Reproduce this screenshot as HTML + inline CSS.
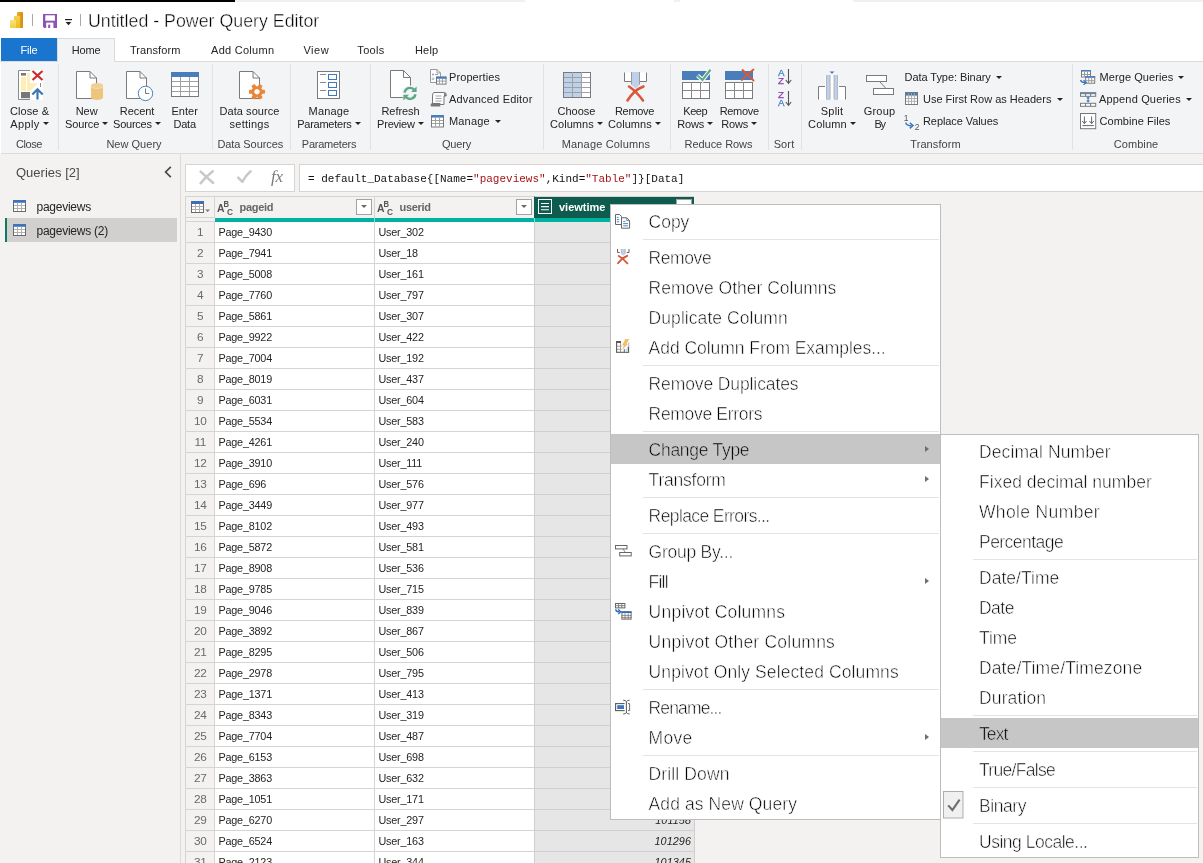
<!DOCTYPE html>
<html lang="en"><head><meta charset="utf-8"><title>Untitled - Power Query Editor</title>
<style>
*{box-sizing:border-box;margin:0;padding:0}
html,body{width:1203px;height:863px;overflow:hidden;background:#fff}
body{position:relative;will-change:transform;font-family:"Liberation Sans",sans-serif;font-size:11px;color:#252423}
i,b{font-style:normal;font-weight:normal;display:block}
svg{position:absolute;overflow:visible}
.strip{position:absolute;top:0;height:2px}
#titlebar{position:absolute;left:0;top:2px;width:1203px;height:36px;background:#fff}
.tsep{position:absolute;top:12px;width:1px;height:12px;background:#a6a6a6}
#title{position:absolute;left:88px;top:7px;height:24px;line-height:24px;font-size:17.8px;color:#000;white-space:nowrap;-webkit-text-stroke:.4px #fff}
#tabs{position:absolute;left:0;top:38px;width:1203px;height:24px;background:#fff;border-bottom:1px solid #dadbdc}
.tab{position:absolute;top:0;height:23px;line-height:24.4px;text-align:center;font-size:11px;color:#252423;white-space:nowrap}
.tab.file{background:#1a75cf;color:#fff}
.tab.home{background:#f3f4f6;height:24px;border:1px solid #dadbdc;border-bottom:none;line-height:22.4px}
#ribbon{position:absolute;left:1px;top:62px;width:1202px;height:92px;background:#f3f4f6;border-bottom:1px solid #dadbdc}
#ribbon>*{position:absolute}
.gsep{top:2px;width:1px;height:86px;background:#e1e2e4;margin-left:-1px}
.big{top:0;width:80px;height:70px;text-align:center;white-space:nowrap}
.big span{position:absolute;left:0;width:80px;height:13px;line-height:13px;font-size:11px}
.big .l1{top:42.5px}
.big .l2{top:55.5px}
.dd{display:inline-block;width:0;height:0;border:3.1px solid transparent;border-top:3.4px solid #252423;border-bottom:none;margin-left:3.2px;vertical-align:2.2px}
.glabel{top:75px;width:120px;height:14px;line-height:14px;text-align:center;font-size:11px;color:#444;white-space:nowrap}
.small{width:10px;height:18px;white-space:nowrap}
.small span{position:absolute;top:1px;height:14px;line-height:14px;font-size:11px}
#qpane{position:absolute;left:0;top:154px;width:180px;height:709px;background:#f3f2f1}
#vsplit{position:absolute;left:180px;top:154px;width:1px;height:709px;background:#dddbd9}
#mainbg{position:absolute;left:181px;top:154px;width:1022px;height:709px;background:#f3f2f1}
#cornerb{position:absolute;left:0;top:21px;width:30px;height:5px;background:#f3f2f1;border:1px solid #d6d4d2;border-right:none}
#qtitle{position:absolute;left:16px;top:9px;height:20px;line-height:20px;font-size:13px;color:#4a4a4a}
.qitem{position:absolute;left:5px;width:172px;height:23px}
.qitem.sel{background:#d2d0ce;height:24px}
.qitem span{position:absolute;left:31.5px;top:1px;height:23px;line-height:23px;font-size:12px;letter-spacing:-.25px;color:#252423;white-space:nowrap}
.qitem.sel span{top:2px}
.gbar{position:absolute;left:0;top:0;width:2px;height:24px;background:#0e7a64}
#fxctl{position:absolute;left:185px;top:164px;width:110px;height:28px;background:#fff;border:1px solid #d6d4d2}
#fxbox{position:absolute;left:299px;top:164px;width:910px;height:28px;background:#fff;border:1px solid #d6d4d2}
#fxbox span{position:absolute;left:8px;top:6.5px;height:14px;line-height:14px;font-family:"Liberation Mono",monospace;font-size:11px;color:#111;white-space:pre}
#fxbox em{font-style:normal;color:#a31515}
#fx{position:absolute;left:85px;top:1px;height:22px;line-height:22px;font-family:"Liberation Serif",serif;font-style:italic;font-size:17px;color:#7a7a7a;letter-spacing:-.3px}
#grid{position:absolute;left:185px;top:196px;width:510px;height:667px;overflow:hidden}
.hdr{position:absolute;top:0;height:22px;background:#f3f2f1;border:1px solid #d6d4d2;border-right:none;border-bottom:none}
.hdr.corner{border-bottom:none}
.hdr.selh{background:#0e5b4f;border-color:#0e5b4f;border-top-color:#d6d4d2}
.hn{position:absolute;left:24.5px;top:0;height:20px;line-height:20px;font-size:11px;font-weight:bold;color:#666;white-space:nowrap;letter-spacing:-.3px}
.selh .hn{color:#fff;left:24px;letter-spacing:0}
.ddbtn{position:absolute;right:2px;top:2px;width:16px;height:16px;background:#fff;border:1px solid #a3a3a3}
.ddbtn:after{content:"";position:absolute;left:4px;top:5px;border:3px solid transparent;border-top:3.2px solid #6a6a6a;border-bottom:none}
#tealbar{position:absolute;left:30px;top:22px;width:481px;height:4px;background:#00b3a1}
.row{position:absolute;left:0;width:510px;height:21px;white-space:nowrap}
.row span{position:absolute;top:0;height:21px;line-height:21px;border-left:1px solid #d6d4d2;border-bottom:1px solid #d6d4d2;font-size:10.8px;letter-spacing:-.2px;color:#252423;background:#fff;overflow:hidden}
.row .rn{left:0;width:29px;text-align:center;color:#6a6a6a;background:#f3f2f1;font-size:11.8px;letter-spacing:-.3px;padding-left:.5px}
.row .c1{left:29px;width:160px;padding-left:3.5px}
.row .c2{left:189px;width:160px;padding-left:3.5px}
.row .c3{left:349px;width:161px;background:#e6e6e6;border-color:#cfcfcf;border-right:1px solid #cfcfcf;text-align:right;padding-right:3px;font-style:italic;letter-spacing:.08px}
.menu{position:absolute;background:#fff;border:1px solid #bdbdbd;padding:2px 0 0 0}
.mi{position:relative;height:30px}
.mi span{position:absolute;top:0;height:30px;line-height:30px;font-size:17.5px;color:#000;white-space:nowrap;-webkit-text-stroke:.55px #fff}
.mi.hl:before{content:"";position:absolute;left:0;right:0;top:-.7px;height:29.3px;background:#c6c6c6}
.mi.hl span{-webkit-text-stroke-color:#c6c6c6}
.msep{position:relative;height:6px}
.msep i{position:absolute;top:2px;right:1px;height:1px;background:#e3e3e3}
.sub{position:absolute;right:11px;top:10.5px;width:0;height:0;border:3.5px solid transparent;border-left:4.5px solid #6e6e6e;border-right:none}

.small .dd{margin-left:5.2px}

#tealbar i{position:absolute;top:0;width:1px;height:4px;background:#8fd9cf}

.qitem.sel svg{top:6px !important}

</style></head>
<body>
<div class="strip" style="left:0;width:235px;background:#000"></div><div class="strip" style="left:235px;width:290px;background:#f0f0f0"></div><div class="strip" style="left:674px;width:6px;background:#f0f0f0"></div><div class="strip" style="left:853px;width:350px;background:#f0f0f0"></div>
<div id="titlebar"><svg style="left:10px;top:10px" width="13" height="16" viewBox="0 0 13 16" ><defs><linearGradient id="g1" x1="0" y1="0" x2="1" y2="0"><stop offset="0" stop-color="#e8b21e"/><stop offset="1" stop-color="#d48c12"/></linearGradient><linearGradient id="g2" x1="0" y1="0" x2="0" y2="1"><stop offset="0" stop-color="#f6d04a"/><stop offset="1" stop-color="#efb920"/></linearGradient><linearGradient id="g3" x1="0" y1="0" x2="0" y2="1"><stop offset="0" stop-color="#f9e37a"/><stop offset="1" stop-color="#f3cf45"/></linearGradient></defs><rect x="7" y="0" width="6" height="16" rx=".8" fill="url(#g1)"/><rect x="4" y="4" width="6" height="12" rx=".8" fill="url(#g2)"/><rect x="0" y="8" width="6" height="8" rx=".8" fill="url(#g3)"/></svg><i class="tsep" style="left:32px"></i><svg style="left:43px;top:12px" width="14" height="14" viewBox="0 0 14 14" ><path d="M0 0H14V14H1.2L0 12.8Z" fill="#8d52b3"/><rect x="2.3" y="1.3" width="9.6" height="5.4" fill="#fff"/><rect x="3.2" y="8.6" width="7.2" height="5.4" fill="#fff"/><rect x="5.2" y="10.6" width="2" height="3.4" fill="#8d52b3"/></svg><svg style="left:65px;top:17px" width="7" height="7" viewBox="0 0 7 7" ><rect x="0" y="0" width="7" height="1.2" fill="#222"/><path d="M.6 3H6.4L3.5 6.2Z" fill="#222"/></svg><i class="tsep" style="left:80px"></i><span id="title">Untitled - Power Query Editor</span></div>
<div id="tabs"><div class="tab file" style="left:1px;width:56px;letter-spacing:-0.159px">File</div><div class="tab home" style="left:57px;width:58px;letter-spacing:-0.161px">Home</div><div class="tab" style="left:115.19999999999999px;width:80px;letter-spacing:0.087px">Transform</div><div class="tab" style="left:202.7px;width:80px;letter-spacing:0.265px">Add Column</div><div class="tab" style="left:276.3px;width:80px;letter-spacing:0.486px">View</div><div class="tab" style="left:331px;width:80px;letter-spacing:0.323px">Tools</div><div class="tab" style="left:386.7px;width:80px;letter-spacing:0.194px">Help</div></div>
<div id="ribbon">
<i class="gsep" style="left:58px"></i><i class="gsep" style="left:212px"></i><i class="gsep" style="left:290px"></i><i class="gsep" style="left:370px"></i><i class="gsep" style="left:543px"></i><i class="gsep" style="left:670px"></i><i class="gsep" style="left:768px"></i><i class="gsep" style="left:801px"></i><i class="gsep" style="left:1072px"></i>
<svg style="left:17px;top:8px" width="26" height="30" viewBox="0 0 26 30" ><path d="M13 .5H.5V29.5H13" fill="#fff" stroke="#8a8a8a"/><rect x="1" y="1" width="24" height="28" fill="#fff" opacity="0"/><rect x="12" y="0" width="13" height="30" fill="#fff"/><rect x="3" y="3" width="5" height="2.6" fill="#777"/><rect x="3" y="7" width="5" height="14" fill="#fdeeb5"/><path d="M9 3H12V13Q14 13.5 20 13.5L12 21H9Z" fill="#fdeeb5"/><rect x="3" y="22" width="9" height="6.2" fill="#777"/><path d="M22.5 13V17" stroke="#8a8a8a"/><path d="M14.5 1L24.5 10M24.5 1L14.5 10" stroke="#cc2b2b" stroke-width="2.2" fill="none"/><path d="M19.5 29.5V19.5M14.3 24.5L19.5 19.2L24.7 24.5" stroke="#3b78b5" stroke-width="2.2" fill="none"/></svg><div class="big" style="left:-11.5px"><span class="l1" style="letter-spacing:0.096px">Close &amp;</span><span class="l2" style="letter-spacing:0.374px">Apply<b class="dd"></b></span></div>
<div class="glabel" style="left:-32px;letter-spacing:-0.385px">Close</div><svg style="left:75px;top:9px" width="28" height="30" viewBox="0 0 28 30" ><path d="M.5 .5H14L20.5 7V27.5H.5Z" fill="#fff" stroke="#7a7a7a"/><path d="M14 .5V7H20.5" fill="none" stroke="#7a7a7a"/><path d="M15 14.5V26.5A6 2.6 0 0 0 27 26.5V14.5Z" fill="#eec67b"/><ellipse cx="21" cy="14.5" rx="6" ry="2.4" fill="#f1cf8f"/><path d="M15 15A6 2.4 0 0 0 27 15" fill="none" stroke="#f7e3bb" stroke-width=".9"/></svg><div class="big" style="left:45.7px"><span class="l1" style="letter-spacing:0.028px">New</span><span class="l2" style="letter-spacing:-0.127px">Source<b class="dd"></b></span></div>
<svg style="left:125px;top:9px" width="28" height="31" viewBox="0 0 28 31" ><path d="M.5 .5H14L20.5 7V27.5H.5Z" fill="#fff" stroke="#7a7a7a"/><path d="M14 .5V7H20.5" fill="none" stroke="#7a7a7a"/><circle cx="19.5" cy="22.4" r="7.2" fill="#fff" stroke="#4b82bd" stroke-width="1"/><path d="M19.5 17.5V22.5H23.2" fill="none" stroke="#777" stroke-width="1"/></svg><div class="big" style="left:96px"><span class="l1" style="letter-spacing:-0.077px">Recent</span><span class="l2" style="letter-spacing:-0.251px">Sources<b class="dd"></b></span></div>
<svg style="left:170px;top:10px" width="28" height="25" viewBox="0 0 28 25" ><rect x=".5" y=".5" width="27" height="24" fill="#fff" stroke="#7a7a7a"/><rect x="0" y="0" width="28" height="5" fill="#4a7ebb"/><path d="M1 9.5H27" stroke="#a0a0a0"/><path d="M1 14.5H27" stroke="#a0a0a0"/><path d="M1 19.5H27" stroke="#a0a0a0"/><path d="M9.5 5V24" stroke="#a0a0a0"/><path d="M18.5 5V24" stroke="#a0a0a0"/></svg><div class="big" style="left:143.7px"><span class="l1" style="letter-spacing:0.061px">Enter</span><span class="l2" style="letter-spacing:-0.213px">Data</span></div>
<div class="glabel" style="left:73px;letter-spacing:0.019px">New Query</div><svg style="left:238px;top:9px" width="27" height="30" viewBox="0 0 27 30" ><path d="M.5 .5H14L20.5 7V27.5H.5Z" fill="#fff" stroke="#7a7a7a"/><path d="M14 .5V7H20.5" fill="none" stroke="#7a7a7a"/><g transform="translate(18 20.8) rotate(30)" fill="#e8873a"><rect x="-2" y="-8" width="4" height="5" rx=".8" transform="rotate(0)"/><rect x="-2" y="-8" width="4" height="5" rx=".8" transform="rotate(60)"/><rect x="-2" y="-8" width="4" height="5" rx=".8" transform="rotate(120)"/><rect x="-2" y="-8" width="4" height="5" rx=".8" transform="rotate(180)"/><rect x="-2" y="-8" width="4" height="5" rx=".8" transform="rotate(240)"/><rect x="-2" y="-8" width="4" height="5" rx=".8" transform="rotate(300)"/><circle r="5.6"/><circle r="2.6" fill="#fff"/></g></svg><div class="big" style="left:208.5px"><span class="l1" style="letter-spacing:0.053px">Data source</span><span class="l2" style="letter-spacing:0.247px">settings</span></div>
<div class="glabel" style="left:189.3px;letter-spacing:-0.08px">Data Sources</div><svg style="left:316px;top:9px" width="23" height="28" viewBox="0 0 23 28" ><rect x=".5" y=".5" width="22" height="27" fill="#fff" stroke="#7a7a7a"/><path d="M3 3.5H9M3 11.5H9M3 19.5H9" stroke="#8a8a8a"/><rect x="11.5" y="3.5" width="8" height="5" fill="#fff" stroke="#3b78c0"/><rect x="11.5" y="11.5" width="8" height="5" fill="#fff" stroke="#3b78c0"/><rect x="11.5" y="19.5" width="8" height="5" fill="#fff" stroke="#3b78c0"/></svg><div class="big" style="left:288px"><span class="l1" style="letter-spacing:0.172px">Manage</span><span class="l2" style="letter-spacing:-0.246px">Parameters<b class="dd"></b></span></div>
<div class="glabel" style="left:268px;letter-spacing:-0.246px">Parameters</div><svg style="left:389px;top:8px" width="28" height="31" viewBox="0 0 28 31" ><path d="M.5 .5H13.5L20.5 7.5V27.5H.5Z" fill="#fff" stroke="#7a7a7a"/><path d="M13.5 .5V7.5H20.5" fill="none" stroke="#7a7a7a"/><circle cx="20" cy="23.4" r="8" fill="#f3f4f6"/><g fill="none" stroke="#5ea88a" stroke-width="2.4"><path d="M14.6 22.6A5.5 5.5 0 0 1 24 19.6"/><path d="M25.4 24.2A5.5 5.5 0 0 1 16 27.2"/></g><path d="M26.6 16.4V22H21Z" fill="#5ea88a"/><path d="M13.4 30.4V24.8H19Z" fill="#5ea88a"/></svg><div class="big" style="left:359.5px"><span class="l1" style="letter-spacing:-0.062px">Refresh</span><span class="l2" style="letter-spacing:-0.204px">Preview<b class="dd"></b></span></div>
<div class="small" style="left:429px;top:7px"><svg style="left:0px;top:0px" width="17" height="16" viewBox="0 0 17 16" ><path d="M.5 .5H7L10.5 4V13.5H.5Z" fill="#fff" stroke="#9a9a9a"/><path d="M7 .5V4H10.5" fill="none" stroke="#9a9a9a"/><circle cx="3" cy="5.5" r="1" fill="#9a9a9a"/><path d="M5 5.5H8" stroke="#9a9a9a"/><circle cx="3" cy="9.8" r="1" fill="none" stroke="#9a9a9a" stroke-width=".7"/><g transform="translate(6 7.6)"><rect x=".5" y=".5" width="9.5" height="7" fill="#fff" stroke="#7a7a7a"/><rect x="0" y="0" width="10.5" height="2.2" fill="#4a7ebb"/><path d="M1 4.5H9.5" stroke="#a0a0a0"/><path d="M3.5 2.2V7" stroke="#a0a0a0"/><path d="M6.5 2.2V7" stroke="#a0a0a0"/></g></svg><span style="left:19px;letter-spacing:0.086px">Properties</span></div>
<div class="small" style="left:429px;top:29px"><svg style="left:0px;top:1px" width="17" height="15" viewBox="0 0 17 15" ><path d="M4 .5H14.5Q16.2 .5 16.2 3V4H14V12.5H2.5V4Q2.5 .5 4 .5Z" fill="#fff" stroke="#777"/><path d="M14 .8Q16 1 16.2 4H14Z" fill="#777"/><path d="M5.5 4H11.5M5.5 6.5H11.5M5.5 9H11.5" stroke="#8a8a8a" stroke-width=".8"/><path d="M.5 13.3Q.5 11 3 11H10.5Q9.5 13 10.5 14.5H2Q.5 14.5 .5 13.3Z" fill="#777"/></svg><span style="left:19px;letter-spacing:0.185px">Advanced Editor</span></div>
<div class="small" style="left:429px;top:51px"><svg style="left:1px;top:2px" width="13" height="12.5" viewBox="0 0 13 12.5" ><rect x=".5" y=".5" width="12" height="11.5" fill="#fff" stroke="#7a7a7a"/><rect x="0" y="0" width="13" height="2.6" fill="#4a7ebb"/><path d="M1 5.5H12" stroke="#a0a0a0"/><path d="M1 8.5H12" stroke="#a0a0a0"/><path d="M4.5 2.6V11.5" stroke="#a0a0a0"/><path d="M8.5 2.6V11.5" stroke="#a0a0a0"/></svg><span style="left:19px;letter-spacing:0.172px">Manage<b class="dd"></b></span></div>
<div class="glabel" style="left:395.5px;letter-spacing:-0.174px">Query</div><svg style="left:562px;top:10px" width="28" height="26" viewBox="0 0 28 26" ><rect x="0" y="0" width="28" height="26" fill="#fff"/><rect x="0" y="0" width="18.5" height="26" fill="#bdd2ea"/><rect x=".5" y=".5" width="27" height="25" fill="none" stroke="#7a7a7a"/><path d="M1 5.5H27" stroke="#a0a0a0"/><path d="M1 10.5H27" stroke="#a0a0a0"/><path d="M1 15.5H27" stroke="#a0a0a0"/><path d="M1 20.5H27" stroke="#a0a0a0"/><path d="M9.5 0V25" stroke="#a0a0a0"/><path d="M18.5 0V25" stroke="#a0a0a0"/></svg><div class="big" style="left:535.5px"><span class="l1" style="letter-spacing:-0.004px">Choose</span><span class="l2" style="letter-spacing:0.042px">Columns<b class="dd"></b></span></div>
<svg style="left:623px;top:9.5px" width="23" height="30" viewBox="0 0 23 30" ><path d="M.5 .5V9.5H7.5V.5M15.5 .5V9.5H22.5V.5" fill="#fff" stroke="#7a7a7a"/><path d="M7.5 0H15.5V13L11.5 16.5L7.5 13Z" fill="#bdd2ea"/><path d="M7.5 0V12.5M15.5 0V12.5" stroke="#9a9a9a"/><path d="M3.5 28.5Q10 18 19.5 14.5M5 14.5Q12 19 19 28.5" fill="none" stroke="#d9583a" stroke-width="2.6" stroke-linecap="round"/></svg><div class="big" style="left:593.5px"><span class="l1" style="letter-spacing:-0.311px">Remove</span><span class="l2" style="letter-spacing:0.042px">Columns<b class="dd"></b></span></div>
<div class="glabel" style="left:545px;letter-spacing:0.17px">Manage Columns</div><svg style="left:681px;top:7px" width="30" height="30" viewBox="0 0 30 30" ><rect x="0" y="2" width="28" height="9" fill="#4a7ebb"/><g transform="translate(0 13)"><rect x=".5" y=".5" width="27" height="16" fill="#fff" stroke="#7a7a7a"/><path d="M1 8.5H27" stroke="#8a8a8a"/><path d="M9.5 0V16" stroke="#8a8a8a"/><path d="M18.5 0V16" stroke="#8a8a8a"/></g><path d="M15.5 6.5L20.5 11L28.5 .8" fill="none" stroke="#fff" stroke-width="4.2"/><path d="M15.5 6.5L20.5 11L28.5 .8" fill="none" stroke="#5ea88a" stroke-width="2.2"/></svg><div class="big" style="left:654.2px"><span class="l1" style="letter-spacing:-0.476px">Keep</span><span class="l2" style="letter-spacing:-0.154px">Rows<b class="dd"></b></span></div>
<svg style="left:724px;top:7px" width="30" height="30" viewBox="0 0 30 30" ><rect x="0" y="2" width="28" height="9" fill="#4a7ebb"/><g transform="translate(0 13)"><rect x=".5" y=".5" width="27" height="16" fill="#fff" stroke="#7a7a7a"/><path d="M1 8.5H27" stroke="#8a8a8a"/><path d="M9.5 0V16" stroke="#8a8a8a"/><path d="M18.5 0V16" stroke="#8a8a8a"/></g><path d="M17.5 1L28.5 11.5M28.5 .5Q22 5 17 11" fill="none" stroke="#d9583a" stroke-width="1.9" stroke-linecap="round"/></svg><div class="big" style="left:698.2px"><span class="l1" style="letter-spacing:-0.311px">Remove</span><span class="l2" style="letter-spacing:-0.154px">Rows<b class="dd"></b></span></div>
<div class="glabel" style="left:657.5px;letter-spacing:-0.062px">Reduce Rows</div><svg style="left:776.5px;top:7px" width="15" height="16" viewBox="0 0 15 16" ><text x="0" y="7" font-family="Liberation Sans, sans-serif" font-size="9.8" stroke="#3e7bc4" stroke-width=".25" fill="#3e7bc4">A</text><text x="0" y="15" font-family="Liberation Sans, sans-serif" font-size="9.8" stroke="#8b3fb3" stroke-width=".25" fill="#8b3fb3">Z</text><path d="M10.5 0V14M7.8 11L10.5 14.3L13.2 11" fill="none" stroke="#555" stroke-width="1.1"/></svg><svg style="left:776.5px;top:29px" width="15" height="16" viewBox="0 0 15 16" ><text x="0" y="7" font-family="Liberation Sans, sans-serif" font-size="9.8" stroke="#8b3fb3" stroke-width=".25" fill="#8b3fb3">Z</text><text x="0" y="15" font-family="Liberation Sans, sans-serif" font-size="9.8" stroke="#3e7bc4" stroke-width=".25" fill="#3e7bc4">A</text><path d="M10.5 0V14M7.8 11L10.5 14.3L13.2 11" fill="none" stroke="#555" stroke-width="1.1"/></svg><div class="glabel" style="left:723px;letter-spacing:0.128px">Sort</div><svg style="left:817px;top:8.5px" width="28" height="29" viewBox="0 0 28 29" ><path d="M.5 28.5V15.5H7.5V28.5M20.5 28.5V15.5H27.5V28.5" fill="#fff" stroke="#7a7a7a"/><rect x="7" y="4" width="14" height="25" fill="#fff"/><rect x="8.5" y="4" width="3.6" height="25" fill="#bdd2ea"/><rect x="16" y="4" width="3.6" height="25" fill="#bdd2ea"/><path d="M8.5 4V28.5M12.1 4V28.5M16 4V28.5M19.6 4V28.5" stroke="#a8a8a8" stroke-width=".8"/><path d="M11.5 .6H16.5L14 2.8Z" fill="#3b78c0"/></svg><div class="big" style="left:791px"><span class="l1" style="letter-spacing:0.199px">Split</span><span class="l2" style="letter-spacing:0.116px">Column<b class="dd"></b></span></div>
<svg style="left:865px;top:13px" width="28" height="20" viewBox="0 0 28 20" ><rect x=".5" y=".5" width="20" height="6" fill="#fff" stroke="#7a7a7a"/><rect x="7.5" y="13.5" width="20" height="6" fill="#fff" stroke="#7a7a7a"/><path d="M13.5 6.5L20 13.5" stroke="#7a7a7a"/></svg><div class="big" style="left:838.5px"><span class="l1" style="letter-spacing:0.204px">Group</span><span class="l2" style="letter-spacing:-1.422px">By</span></div>
<div class="small" style="left:903px;top:7px"><span style="left:0.5px;letter-spacing:-0.055px">Data Type: Binary<b class="dd"></b></span></div>
<div class="small" style="left:903px;top:29px"><svg style="left:1px;top:1px" width="13" height="13" viewBox="0 0 13 13" ><rect x=".5" y=".5" width="12" height="12" fill="#fff" stroke="#777"/><rect x="1" y="1" width="11" height="2.6" fill="#3e7bc4"/><path d="M3.6 1V12M6.5 1V12M9.4 1V12M1 3.7H12M1 6.5H12M1 9.3H12" stroke="#a8a8a8" stroke-width=".9"/></svg><span style="left:19px;letter-spacing:0.001px">Use First Row as Headers<b class="dd"></b></span></div>
<div class="small" style="left:903px;top:51px"><svg style="left:0px;top:0px" width="17" height="17" viewBox="0 0 17 17" ><text x="-.3" y="7.6" font-family="Liberation Sans, sans-serif" font-size="8.5" fill="#555">1</text><text x="10.8" y="16.8" font-family="Liberation Sans, sans-serif" font-size="8.5" fill="#555">2</text><path d="M1.8 9.5Q2.2 13 7.5 12.6" fill="none" stroke="#3b78c0" stroke-width="1.5"/><path d="M5.8 9.8L9 12.6L5.8 15.4" fill="none" stroke="#3b78c0" stroke-width="1.5"/></svg><span style="left:19px;letter-spacing:-0.081px">Replace Values</span></div>
<div class="glabel" style="left:874.5px;letter-spacing:0.087px">Transform</div><div class="small" style="left:1079px;top:7px"><svg style="left:0px;top:1px" width="16" height="16" viewBox="0 0 16 16" ><g transform="translate(1 0)"><rect x=".5" y=".5" width="9" height="6.5" fill="#fff" stroke="#7a7a7a"/><rect x="0" y="0" width="10" height="1.6" fill="#4a7ebb"/><path d="M1 4.5H9" stroke="#9a9a9a"/><path d="M3.5 1.6V6.5" stroke="#9a9a9a"/><path d="M6.5 1.6V6.5" stroke="#9a9a9a"/></g><g transform="translate(5.2 6.2)"><rect x=".5" y=".5" width="9" height="6.5" fill="#fff" stroke="#7a7a7a"/><rect x="0" y="0" width="10" height="1.6" fill="#4a7ebb"/><path d="M1 4.5H9" stroke="#9a9a9a"/><path d="M3.5 1.6V6.5" stroke="#9a9a9a"/><path d="M6.5 1.6V6.5" stroke="#9a9a9a"/></g><path d="M.6 10Q1.2 12.6 5 12.4" fill="none" stroke="#3b78c0" stroke-width="1.4"/><path d="M3.6 10.2L6.2 12.4L3.6 14.8" fill="none" stroke="#3b78c0" stroke-width="1.4"/></svg><span style="left:19.5px;letter-spacing:0.08px">Merge Queries<b class="dd"></b></span></div>
<div class="small" style="left:1079px;top:29px"><svg style="left:0px;top:0px" width="17" height="17" viewBox="0 0 17 17" ><g transform="translate(0 1.2)"><rect x="0" y="0" width="16.2" height="1.6" fill="#3b78c0"/><rect x=".5" y="1.5" width="15.2" height="2.6" fill="#fff" stroke="#777"/><path d="M5.6 1.5V4M10.6 1.5V4" stroke="#777"/></g><g transform="translate(0 11.8)"><rect x=".5" y=".5" width="15.2" height="3" fill="#fff" stroke="#777"/><path d="M5.6 .5V3.5M10.6 .5V3.5" stroke="#777"/></g><path d="M6 6.4H10.2L8.1 8.2ZM6 9.4H10.2L8.1 11.4Z" fill="#3b78c0"/><path d="M8.1 5.5V11" stroke="#3b78c0" stroke-width="1"/></svg><span style="left:19px;letter-spacing:0.164px">Append Queries<b class="dd"></b></span></div>
<div class="small" style="left:1079px;top:51px"><svg style="left:0px;top:0px" width="17" height="17" viewBox="0 0 17 17" ><rect x=".5" y=".5" width="15.2" height="15.2" fill="#fff" stroke="#777"/><path d="M4.4 3.5V10.5M2.2 8L4.4 10.6L6.6 8M11.6 3.5V10.5M9.4 8L11.6 10.6L13.8 8" fill="none" stroke="#666" stroke-width="1"/><path d="M2.4 12.6H13.8" stroke="#666"/></svg><span style="left:19.5px;letter-spacing:0.045px">Combine Files</span></div>
<div class="glabel" style="left:1075px;letter-spacing:0.096px">Combine</div></div>
<div id="qpane"><div id="qtitle">Queries [2]</div><svg style="left:164px;top:11.5px" width="8" height="12" viewBox="0 0 8 12" ><path d="M6.8 .8L1.6 6L6.8 11.2" fill="none" stroke="#4a4a4a" stroke-width="1.7"/></svg><div class="qitem" style="top:41px"><svg style="left:8px;top:5px" width="13" height="12" viewBox="0 0 13 12" ><rect x=".5" y=".5" width="12" height="11" fill="#fff" stroke="#6a6a6a"/><rect x="0" y="0" width="13" height="2.8" fill="#3e73b9"/><path d="M1 5.5H12" stroke="#b0b0b0"/><path d="M1 8.5H12" stroke="#b0b0b0"/><path d="M4.5 2.8V11" stroke="#b0b0b0"/><path d="M8.5 2.8V11" stroke="#b0b0b0"/></svg><span>pageviews</span></div><div class="qitem sel" style="top:64px"><i class="gbar"></i><svg style="left:8px;top:5px" width="13" height="12" viewBox="0 0 13 12" ><rect x=".5" y=".5" width="12" height="11" fill="#fff" stroke="#6a6a6a"/><rect x="0" y="0" width="13" height="2.8" fill="#3e73b9"/><path d="M1 5.5H12" stroke="#b0b0b0"/><path d="M1 8.5H12" stroke="#b0b0b0"/><path d="M4.5 2.8V11" stroke="#b0b0b0"/><path d="M8.5 2.8V11" stroke="#b0b0b0"/></svg><span>pageviews (2)</span></div></div>
<i id="vsplit"></i><div id="mainbg"></div>
<div id="fxctl"><svg style="left:12.5px;top:5px" width="16" height="15" viewBox="0 0 16 15" ><path d="M1.6 1.6Q7 6.5 14.2 13M13.8 1.2Q7.5 6 1.6 13.2" fill="none" stroke="#c8c8c8" stroke-width="2.5" stroke-linecap="round"/></svg><svg style="left:51px;top:5px" width="15" height="14" viewBox="0 0 15 14" ><path d="M1.2 7.6L5.4 11.8Q8.5 5.5 13.6 1.2" fill="none" stroke="#c8c8c8" stroke-width="2.5" stroke-linecap="round" stroke-linejoin="round"/></svg><span id="fx">fx</span></div><div id="fxbox"><span>= default_Database{[Name=<em>"pageviews"</em>,Kind=<em>"Table"</em>]}[Data]</span></div>
<div id="grid">
<div class="hdr corner" style="left:0;width:29px"><svg style="left:5px;top:4px" width="20" height="13" viewBox="0 0 20 13" ><g><rect x=".5" y=".5" width="12" height="11" fill="#fff" stroke="#6a6a6a"/><rect x="0" y="0" width="13" height="3" fill="#3c6eb4"/><path d="M1 5.5H12" stroke="#b0b0b0"/><path d="M1 8.5H12" stroke="#b0b0b0"/><path d="M4.5 3V11" stroke="#b0b0b0"/><path d="M8.5 3V11" stroke="#b0b0b0"/></g><path d="M14.2 8.6H19L16.6 11Z" fill="#777"/></svg></div><div class="hdr" style="left:29px;width:160px"><svg style="left:0px;top:0px" width="20" height="20" viewBox="0 0 20 20" ><text x="2" y="14.6" font-family="Liberation Sans, sans-serif" font-weight="bold" font-size="10.4" fill="#555">A</text><text transform="translate(8.6 9.5) scale(.8 1)" font-family="Liberation Sans, sans-serif" font-weight="bold" font-size="9.6" fill="#555">B</text><text transform="translate(11.9 17.6) scale(.85 1)" font-family="Liberation Sans, sans-serif" font-weight="bold" font-size="9.8" fill="#555">C</text></svg><span class="hn">pageid</span><i class="ddbtn"></i></div><div class="hdr" style="left:189px;width:160px"><svg style="left:0px;top:0px" width="20" height="20" viewBox="0 0 20 20" ><text x="2" y="14.6" font-family="Liberation Sans, sans-serif" font-weight="bold" font-size="10.4" fill="#555">A</text><text transform="translate(8.6 9.5) scale(.8 1)" font-family="Liberation Sans, sans-serif" font-weight="bold" font-size="9.6" fill="#555">B</text><text transform="translate(11.9 17.6) scale(.85 1)" font-family="Liberation Sans, sans-serif" font-weight="bold" font-size="9.8" fill="#555">C</text></svg><span class="hn">userid</span><i class="ddbtn"></i></div><div class="hdr selh" style="left:349px;width:160px"><svg style="left:3px;top:2px" width="14" height="15" viewBox="0 0 14 15" ><rect x=".5" y=".5" width="13" height="14" fill="none" stroke="#fff"/><path d="M3 4.5H11M3 7.6H11M3 10.7H11" stroke="#fff" stroke-width="1.1"/></svg><span class="hn">viewtime</span><i class="ddbtn"></i></div><div id="tealbar"><i style="left:159px"></i><i style="left:319px"></i></div><div id="cornerb"></div>
<div class="row" style="top:26px"><span class="rn">1</span><span class="c1">Page_9430</span><span class="c2">User_302</span><span class="c3"></span></div>
<div class="row" style="top:47px"><span class="rn">2</span><span class="c1">Page_7941</span><span class="c2">User_18</span><span class="c3"></span></div>
<div class="row" style="top:68px"><span class="rn">3</span><span class="c1">Page_5008</span><span class="c2">User_161</span><span class="c3"></span></div>
<div class="row" style="top:89px"><span class="rn">4</span><span class="c1">Page_7760</span><span class="c2">User_797</span><span class="c3"></span></div>
<div class="row" style="top:110px"><span class="rn">5</span><span class="c1">Page_5861</span><span class="c2">User_307</span><span class="c3"></span></div>
<div class="row" style="top:131px"><span class="rn">6</span><span class="c1">Page_9922</span><span class="c2">User_422</span><span class="c3"></span></div>
<div class="row" style="top:152px"><span class="rn">7</span><span class="c1">Page_7004</span><span class="c2">User_192</span><span class="c3"></span></div>
<div class="row" style="top:173px"><span class="rn">8</span><span class="c1">Page_8019</span><span class="c2">User_437</span><span class="c3"></span></div>
<div class="row" style="top:194px"><span class="rn">9</span><span class="c1">Page_6031</span><span class="c2">User_604</span><span class="c3"></span></div>
<div class="row" style="top:215px"><span class="rn">10</span><span class="c1">Page_5534</span><span class="c2">User_583</span><span class="c3"></span></div>
<div class="row" style="top:236px"><span class="rn">11</span><span class="c1">Page_4261</span><span class="c2">User_240</span><span class="c3"></span></div>
<div class="row" style="top:257px"><span class="rn">12</span><span class="c1">Page_3910</span><span class="c2">User_111</span><span class="c3"></span></div>
<div class="row" style="top:278px"><span class="rn">13</span><span class="c1">Page_696</span><span class="c2">User_576</span><span class="c3"></span></div>
<div class="row" style="top:299px"><span class="rn">14</span><span class="c1">Page_3449</span><span class="c2">User_977</span><span class="c3"></span></div>
<div class="row" style="top:320px"><span class="rn">15</span><span class="c1">Page_8102</span><span class="c2">User_493</span><span class="c3"></span></div>
<div class="row" style="top:341px"><span class="rn">16</span><span class="c1">Page_5872</span><span class="c2">User_581</span><span class="c3"></span></div>
<div class="row" style="top:362px"><span class="rn">17</span><span class="c1">Page_8908</span><span class="c2">User_536</span><span class="c3"></span></div>
<div class="row" style="top:383px"><span class="rn">18</span><span class="c1">Page_9785</span><span class="c2">User_715</span><span class="c3"></span></div>
<div class="row" style="top:404px"><span class="rn">19</span><span class="c1">Page_9046</span><span class="c2">User_839</span><span class="c3"></span></div>
<div class="row" style="top:425px"><span class="rn">20</span><span class="c1">Page_3892</span><span class="c2">User_867</span><span class="c3"></span></div>
<div class="row" style="top:446px"><span class="rn">21</span><span class="c1">Page_8295</span><span class="c2">User_506</span><span class="c3"></span></div>
<div class="row" style="top:467px"><span class="rn">22</span><span class="c1">Page_2978</span><span class="c2">User_795</span><span class="c3"></span></div>
<div class="row" style="top:488px"><span class="rn">23</span><span class="c1">Page_1371</span><span class="c2">User_413</span><span class="c3"></span></div>
<div class="row" style="top:509px"><span class="rn">24</span><span class="c1">Page_8343</span><span class="c2">User_319</span><span class="c3"></span></div>
<div class="row" style="top:530px"><span class="rn">25</span><span class="c1">Page_7704</span><span class="c2">User_487</span><span class="c3"></span></div>
<div class="row" style="top:551px"><span class="rn">26</span><span class="c1">Page_6153</span><span class="c2">User_698</span><span class="c3"></span></div>
<div class="row" style="top:572px"><span class="rn">27</span><span class="c1">Page_3863</span><span class="c2">User_632</span><span class="c3"></span></div>
<div class="row" style="top:593px"><span class="rn">28</span><span class="c1">Page_1051</span><span class="c2">User_171</span><span class="c3"></span></div>
<div class="row" style="top:614px"><span class="rn">29</span><span class="c1">Page_6270</span><span class="c2">User_297</span><span class="c3">101158</span></div>
<div class="row" style="top:635px"><span class="rn">30</span><span class="c1">Page_6524</span><span class="c2">User_163</span><span class="c3">101296</span></div>
<div class="row" style="top:656px"><span class="rn">31</span><span class="c1">Page_2123</span><span class="c2">User_344</span><span class="c3">101345</span></div>
</div>
<div class="menu" id="ctx" style="left:610px;top:204px;width:331px">
<div class="mi "><svg style="left:4px;top:7px" width="16" height="15" viewBox="0 0 16 15" ><path d="M.5 .5H4.5L6.5 2.5V10.5H.5Z" fill="#fff" stroke="#666"/><path d="M1.8 3.4H3.6M1.8 5.6H4.2M1.8 7.8H4.2" stroke="#3b78c0" stroke-width=".9"/><path d="M6.5 3.8H11.8L14.6 6.6V14.2H6.5Z" fill="#fff" stroke="#666"/><path d="M11.8 3.8V6.6H14.6" fill="none" stroke="#666" stroke-width=".8"/><path d="M8.2 7.4H10.4M8.2 9.6H13M8.2 11.8H13" stroke="#3b78c0" stroke-width=".9"/></svg><span style="left:37.6px;letter-spacing:-0.04px">Copy</span></div>
<div class="msep"><i style="left:32px"></i></div><div class="mi "><svg style="left:6px;top:6px" width="13" height="16" viewBox="0 0 13 16" ><path d="M.5 0V3.5H2.8M9.7 3.5H12V0" fill="none" stroke="#666"/><path d="M4.4 0H8.2V5.2L6.3 6.8L4.4 5.2Z" fill="#bdd2ea"/><path d="M4.4 0V4.5M8.2 0V4.5" stroke="#a0a0a0" stroke-width=".7"/><path d="M1 14.3Q5 9 10.2 6.8M1.8 7Q6 9.5 10.4 14.4" fill="none" stroke="#d9583a" stroke-width="1.9" stroke-linecap="round"/></svg><span style="left:37.6px;letter-spacing:-0.429px">Remove</span></div>
<div class="mi "><span style="left:37.6px;letter-spacing:-0.001px">Remove Other Columns</span></div>
<div class="mi "><span style="left:37.6px;letter-spacing:0.061px">Duplicate Column</span></div>
<div class="mi "><svg style="left:5px;top:5px" width="14" height="16" viewBox="0 0 14 16" ><rect x=".6" y="3.6" width="12" height="10.7" fill="#fff" stroke="#5a5a5a" stroke-width="1.1"/><rect x="0" y="3" width="6" height="2" fill="#5a5a5a"/><rect x="5" y="2.5" width="8.6" height="6" fill="#fff"/><path d="M12.6 4.5V9" stroke="#b8b8b8" stroke-width=".9"/><path d="M4.5 5V14M1 8.2H5.6M1 11.3H5.6" stroke="#8a8a8a" stroke-width=".8"/><path d="M8.3 11V14" stroke="#5a5a5a" stroke-width=".9"/><path d="M8.8 13.8H12V7.4Z" fill="#c5daf0"/><path d="M9.4 1.1H13.2L10.6 6H11.9L6.2 12L7.8 7.3H6Z" fill="#f0bf6a"/></svg><span style="left:37.6px;letter-spacing:-0.044px">Add Column From Examples...</span></div>
<div class="msep"><i style="left:32px"></i></div><div class="mi "><span style="left:37.6px;letter-spacing:-0.114px">Remove Duplicates</span></div>
<div class="mi "><span style="left:37.6px;letter-spacing:-0.321px">Remove Errors</span></div>
<div class="msep"><i style="left:32px"></i></div><div class="mi hl"><span style="left:37.6px;letter-spacing:-0.282px">Change Type</span><b class="sub"></b></div>
<div class="mi "><span style="left:37.6px;letter-spacing:-0.222px">Transform</span><b class="sub"></b></div>
<div class="msep"><i style="left:32px"></i></div><div class="mi "><span style="left:37.6px;letter-spacing:-0.606px">Replace Errors...</span></div>
<div class="msep"><i style="left:32px"></i></div><div class="mi "><svg style="left:4px;top:8px" width="17" height="12" viewBox="0 0 17 12" ><rect x=".5" y=".5" width="11.5" height="3.4" fill="#fff" stroke="#666"/><rect x="4.7" y="7.5" width="11.5" height="3.4" fill="#fff" stroke="#666"/><path d="M8 4L10.5 7.5" stroke="#666" stroke-width=".8"/></svg><span style="left:37.6px;letter-spacing:-0.256px">Group By...</span></div>
<div class="mi "><span style="left:37.6px;letter-spacing:-0.79px">Fill</span><b class="sub"></b></div>
<div class="mi "><svg style="left:4px;top:6px" width="17" height="17" viewBox="0 0 17 17" ><rect x=".5" y=".5" width="9.4" height="4.4" fill="#fff" stroke="#666"/><path d="M3.6 .5V5M6.8 .5V5M.5 2.7H10" stroke="#666" stroke-width=".8"/><g transform="translate(6.4 8.2)"><rect x=".5" y=".9" width="9.2" height="7" fill="#fff" stroke="#666"/><rect x="0" y="0" width="10.2" height="1.8" fill="#2f6db5"/><path d="M3.6 2V8M6.8 2V8M.5 4.2H10M.5 6.2H10" stroke="#777" stroke-width=".8"/></g><path d="M.6 6.4Q1 9 4.6 8.8" fill="none" stroke="#2f6db5" stroke-width="1.4"/><path d="M3.2 6.4L5.8 8.8L3.2 11" fill="none" stroke="#2f6db5" stroke-width="1.4"/></svg><span style="left:37.6px;letter-spacing:0.23px">Unpivot Columns</span></div>
<div class="mi "><span style="left:37.6px;letter-spacing:0.219px">Unpivot Other Columns</span></div>
<div class="mi "><span style="left:37.6px;letter-spacing:0.108px">Unpivot Only Selected Columns</span></div>
<div class="msep"><i style="left:32px"></i></div><div class="mi "><svg style="left:4px;top:6px" width="17" height="16" viewBox="0 0 17 16" ><rect x=".6" y="4.6" width="10" height="7" fill="#fff" stroke="#5a5a5a" stroke-width="1.1"/><rect x="2.2" y="6.2" width="6.8" height="3.8" fill="#3b78c0"/><rect x="9.6" y="3" width="3.4" height="10.4" fill="#fff"/><path d="M11.4 2.2V14M8.2 1.2Q10.6 1.2 11.4 2.6Q12.2 1.2 14.6 1.2M8.2 15Q10.6 15 11.4 13.6Q12.2 15 14.6 15" fill="none" stroke="#5a5a5a" stroke-width="1"/><path d="M13 4.6H14.6V11.6H13" fill="none" stroke="#5a5a5a" stroke-width=".9"/></svg><span style="left:37.6px;letter-spacing:-0.859px">Rename...</span></div>
<div class="mi "><span style="left:37.6px;letter-spacing:0.276px">Move</span><b class="sub"></b></div>
<div class="msep"><i style="left:32px"></i></div><div class="mi "><span style="left:37.6px;letter-spacing:0.117px">Drill Down</span></div>
<div class="mi "><span style="left:37.6px;letter-spacing:0.095px">Add as New Query</span></div>
</div>
<div class="menu" id="sub" style="left:940px;top:434px;width:259px">
<div class="mi "><span style="left:38px;letter-spacing:0.106px">Decimal Number</span></div>
<div class="mi "><span style="left:38px;letter-spacing:0.032px">Fixed decimal number</span></div>
<div class="mi "><span style="left:38px;letter-spacing:0.357px">Whole Number</span></div>
<div class="mi "><span style="left:38px;letter-spacing:-0.542px">Percentage</span></div>
<div class="msep"><i style="left:32px"></i></div><div class="mi "><span style="left:38px;letter-spacing:0.025px">Date/Time</span></div>
<div class="mi "><span style="left:38px;letter-spacing:-0.517px">Date</span></div>
<div class="mi "><span style="left:38px;letter-spacing:-0.062px">Time</span></div>
<div class="mi "><span style="left:38px;letter-spacing:0.121px">Date/Time/Timezone</span></div>
<div class="mi "><span style="left:38px;letter-spacing:0.13px">Duration</span></div>
<div class="msep"><i style="left:32px"></i></div><div class="mi hl"><span style="left:38px;letter-spacing:-0.927px">Text</span></div>
<div class="msep"><i style="left:32px"></i></div><div class="mi "><span style="left:38px;letter-spacing:-0.7px">True/False</span></div>
<div class="msep"><i style="left:32px"></i></div><div class="mi "><svg style="left:2px;top:0px" width="21" height="28" viewBox="0 0 21 28" ><rect x=".5" y=".5" width="19.5" height="26.5" fill="#f0f0f0" stroke="#adadad"/><path d="M5.2 14.4L9.4 19L16.6 8.6" fill="none" stroke="#6e6e6e" stroke-width="2.1"/></svg><span style="left:38px;letter-spacing:-0.435px">Binary</span></div>
<div class="msep"><i style="left:32px"></i></div><div class="mi "><span style="left:38px;letter-spacing:-0.484px">Using Locale...</span></div>
</div>
</body></html>
